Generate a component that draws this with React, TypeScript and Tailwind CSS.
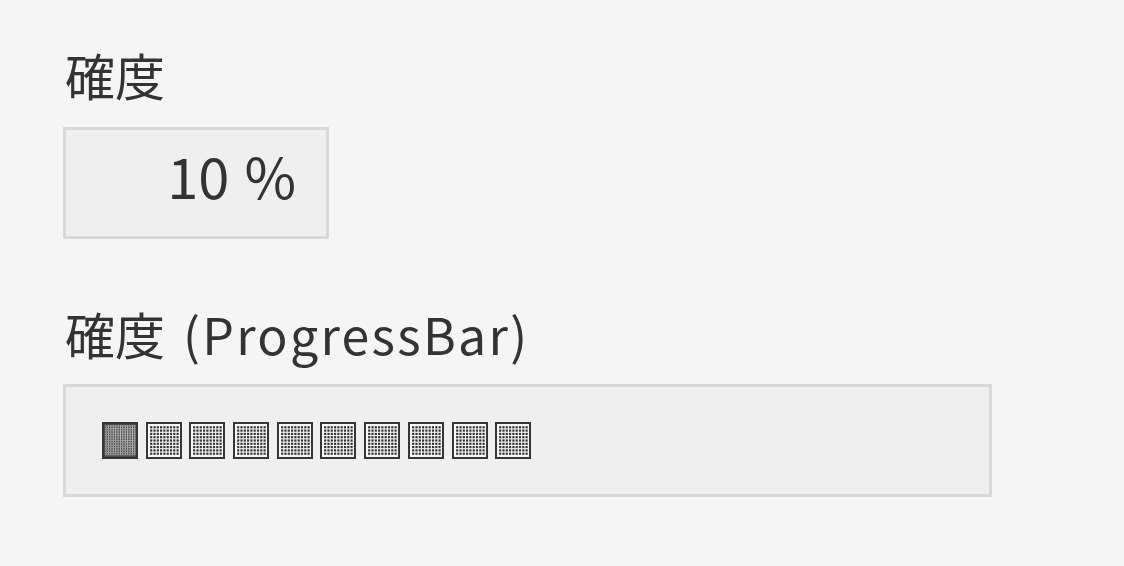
import React from "react";

const font = { fontFamily: '"Noto Sans CJK JP", "Noto Sans", sans-serif' };

// One cell of the progress bar: filled cells get a dense hatch, empty ones a dot grid.
function Cell({ filled }: { filled: boolean }) {
  const dots: React.ReactElement[] = [];
  if (!filled) {
    for (let r = 0; r < 9; r++)
      for (let c = 0; c < 9; c++)
        dots.push(<rect key={`${r}-${c}`} x={4.1 + c * 3.3} y={4.2 + r * 3.3} width={2.2} height={2.2} fill="#333333" />);
  }
  const lines: React.ReactElement[] = [];
  if (filled) {
    for (let i = 0; i < 13; i++) {
      lines.push(<rect key={`v${i}`} x={3.6 + i * 2.4} y={3} width={0.9} height={30} fill="#bdbdbd" />);
      lines.push(<rect key={`h${i}`} x={3} y={3.6 + i * 2.4} width={30} height={0.9} fill="#9a9a9a" />);
    }
  }
  return (
    <svg width="36" height="37" viewBox="0 0 36 37" className="shrink-0">
      <rect x="1" y="1" width="34" height="35" fill={filled ? "#4a4a4a" : "#fafafa"} stroke="#363636" strokeWidth="2" />
      {filled ? lines : dots}
    </svg>
  );
}

export default function App() {
  const value = 10;
  const cells = Array.from({ length: 10 }, (_, i) => i < value / 10);
  return (
    <div className="min-h-screen w-full bg-[#f5f5f5] text-[#333333] px-[63px] pt-[42px]" style={font}>
      <div className="text-[50px] leading-[64px] pl-[2px]">確度</div>
      <div className="mt-[21px] w-[266px] h-[112px] border-[3px] border-[#d9d9d9] bg-[#efefef] flex items-center justify-end pr-[30px] pb-[16px]">
        <span className="text-[56px] leading-none font-normal">
          {value}
          <span className="ml-[15px]">%</span>
        </span>
      </div>
      <div className="mt-[62px] text-[50px] leading-[64px] pl-[2px]">
        確度<span className="ml-[18px] tracking-[2.3px]">(ProgressBar)</span>
      </div>
      <div className="mt-[19px] w-[929px] h-[113px] border-[3px] border-[#d9d9d9] bg-[#efefef] flex items-center gap-[7.7px] pl-[36px]">
        {cells.map((f, i) => (
          <Cell key={i} filled={f} />
        ))}
      </div>
    </div>
  );
}
